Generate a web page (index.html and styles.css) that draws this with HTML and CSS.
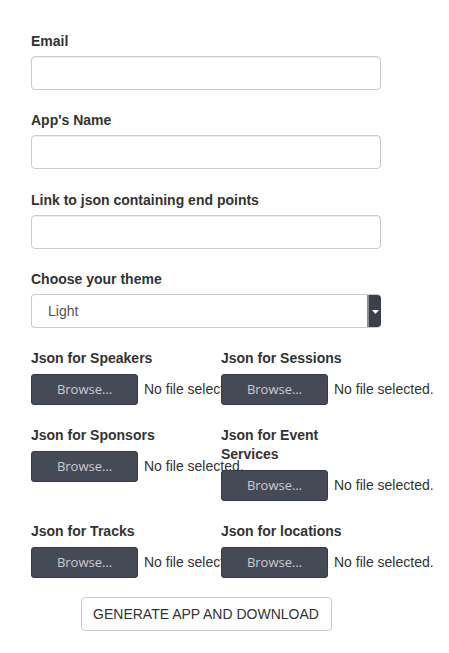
FILE: index.html
```html
<!DOCTYPE html>
<html>
<head>
<meta charset="utf-8">
<link rel="stylesheet" href="styles.css">
</head>
<body>
<form class="form">
  <div class="group">
    <label class="label">Email</label>
    <div class="input"></div>
  </div>
  <div class="group">
    <label class="label">App's Name</label>
    <div class="input"></div>
  </div>
  <div class="group">
    <label class="label">Link to json containing end points</label>
    <div class="input"></div>
  </div>
  <div class="group group-theme">
    <label class="label">Choose your theme</label>
    <div class="select">
      <span class="select-text">Light</span>
      <span class="select-arrow"><svg width="7" height="4" viewBox="0 0 7 4"><path d="M0 0H7L3.5 4Z" fill="#fff"/></svg></span>
    </div>
  </div>
  <div class="files">
    <div class="file-col">
      <label class="label flabel">Json for Speakers</label>
      <div class="file"><span class="browse">Browse…</span><span class="nofile">No file selected.</span></div>
    </div>
    <div class="file-col">
      <label class="label flabel">Json for Sessions</label>
      <div class="file"><span class="browse">Browse…</span><span class="nofile">No file selected.</span></div>
    </div>
    <div class="file-col">
      <label class="label flabel">Json for Sponsors</label>
      <div class="file"><span class="browse">Browse…</span><span class="nofile">No file selected.</span></div>
    </div>
    <div class="file-col">
      <label class="label flabel">Json for Event Services</label>
      <div class="file"><span class="browse">Browse…</span><span class="nofile">No file selected.</span></div>
    </div>
    <div class="file-col">
      <label class="label flabel">Json for Tracks</label>
      <div class="file"><span class="browse">Browse…</span><span class="nofile">No file selected.</span></div>
    </div>
    <div class="file-col">
      <label class="label flabel">Json for locations</label>
      <div class="file"><span class="browse">Browse…</span><span class="nofile">No file selected.</span></div>
    </div>
  </div>
  <div class="actions">
    <button type="button" class="generate">GENERATE APP AND DOWNLOAD</button>
  </div>
</form>
</body>
</html>
```
FILE: styles.css
```css
html, body {
  margin: 0;
  padding: 0;
  background: #fff;
}
body {
  font-family: "Liberation Sans", Arial, Helvetica, sans-serif;
  font-size: 14px;
  line-height: 20px;
  color: #333;
}
.form {
  width: 350px;
  padding: 31px 0 0 31px;
}
.group {
  margin-bottom: 20.3px;
}
.group-theme {
  margin-bottom: 20px;
}
.label {
  display: block;
  font-weight: bold;
  margin-bottom: 5px;
  color: #333;
}
.input {
  height: 32px;
  border: 1px solid #ccc;
  border-radius: 4px;
  box-shadow: inset 0 1px 1px rgba(0,0,0,0.075);
  background: #fff;
}
.select {
  display: flex;
  height: 32px;
  border: 1px solid #ccc;
  border-right: none;
  border-radius: 4px;
  background: #fff;
  overflow: hidden;
}
.select-text {
  flex: 1;
  padding-left: 16px;
  line-height: 32px;
  color: #555;
}
.select-arrow {
  width: 12px;
  display: flex;
  align-items: center;
  justify-content: center;
  padding-top: 2px;
  background: #3b3e4b;
  border-left: 2px solid #8a8a8f;
  margin-top: -1px;
  margin-bottom: -1px;
  border-radius: 0 4px 4px 0;
}
.files {
  display: grid;
  grid-template-columns: 190px 160px;
  row-gap: 20px;
}
.file-col {
  min-width: 0;
}
.flabel {
  max-width: 150px;
  line-height: 19px;
  padding-top: 1px;
  margin-bottom: 6px;
}
.file {
  display: flex;
  align-items: center;
  white-space: nowrap;
  height: 31px;
}
.browse {
  flex: none;
  box-sizing: border-box;
  width: 107px;
  height: 31px;
  border-radius: 3px;
  background: #464a57;
  border: 1px solid #373a44;
  color: #c9cbd1;
  font-family: "Open Sans", "DejaVu Sans", sans-serif;
  font-size: 13px;
  line-height: 29px;
  text-align: center;
}
.nofile {
  margin-left: 6px;
  color: #333;
}
.actions {
  display: flex;
  justify-content: center;
  padding-top: 19px;
}
.generate {
  height: 34px;
  width: 251px;
  border: 1px solid #ccc;
  border-radius: 4px;
  background: #fff;
  color: #333;
  font-family: "Liberation Sans", Arial, sans-serif;
  font-size: 14px;
  padding: 0;
}
```
